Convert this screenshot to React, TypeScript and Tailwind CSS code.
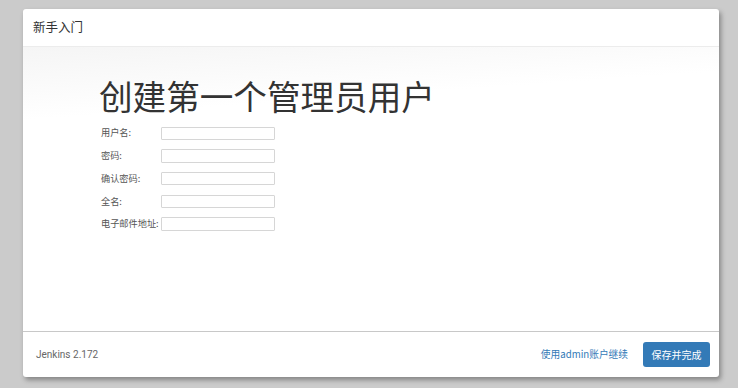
import React from "react";

const font = { fontFamily: '"Noto Sans CJK SC", "Noto Sans", sans-serif' };

const fields = ["用户名:", "密码:", "确认密码:", "全名:", "电子邮件地址:"];

export default function App() {
  return (
    <div
      className="w-[738px] h-[388px] bg-[#cbcbcb] pt-[9px] pl-[23px]"
      style={font}
    >
      <div className="w-[696px] h-[368px] bg-white rounded-[3px] shadow-[2px_3px_5px_rgba(0,0,0,0.35)] flex flex-col overflow-hidden">
        <div className="h-[38px] border-b border-[#ececec] flex items-center pl-[10px] text-[12.5px] text-[#333]">
          新手入门
        </div>
        <div className="flex-1 bg-[linear-gradient(176deg,#f5f5f5_0%,#ffffff_22%)] pl-[76px] pt-[28px]">
          <h1 className="text-[33.6px] leading-[41px] text-[#333]">
            创建第一个管理员用户
          </h1>
          <div className="mt-[6px] flex flex-col">
            {fields.map((f) => (
              <div key={f} className="h-[22.7px] flex items-center">
                <div className="w-[62px] pl-[2px] text-[9.2px] text-[#555] whitespace-nowrap">
                  {f}
                </div>
                <div className="w-[114px] h-[13.5px] border border-[#d6d6d6] rounded-[1px] bg-white" />
              </div>
            ))}
          </div>
        </div>
        <div className="h-[46px] border-t border-[#c8c8c8] flex items-center justify-between pl-[13px] pr-[9px]">
          <span
            className="text-[10px] text-[#666]"
            style={{ fontFamily: '"Roboto", "Liberation Sans", sans-serif' }}
          >
            Jenkins 2.172
          </span>
          <div className="flex items-center gap-[15px]">
            <span className="text-[9.7px] text-[#337ab7]">使用admin账户继续</span>
            <div className="h-[25px] w-[67px] rounded-[3px] bg-[#337ab7] text-white text-[10px] flex items-center justify-center">
              保存并完成
            </div>
          </div>
        </div>
      </div>
    </div>
  );
}
